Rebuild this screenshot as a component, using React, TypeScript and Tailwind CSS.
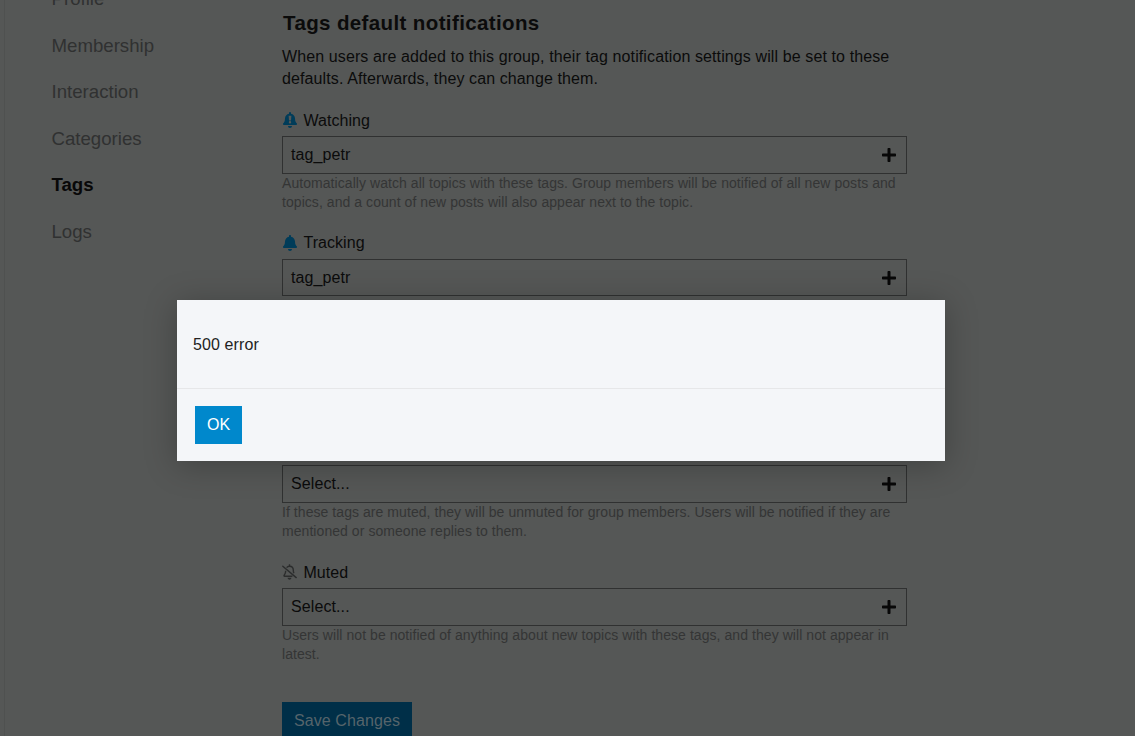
import React from "react";
import { FaBell, FaPlus } from "react-icons/fa";

const navItems = ["Profile", "Membership", "Interaction", "Categories", "Tags", "Logs"];

const WatchingIcon = () => (
  <svg viewBox="0 0 448 512" className="-mt-0.5 h-4 w-3.5 text-[#003c59]" fill="currentColor" fillRule="evenodd">
    <path d="M224 512c35 0 64-29 64-64H160c0 35 29 64 64 64zM439 362c-19-21-55-52-55-154 0-78-54-140-128-155V32a32 32 0 1 0-64 0v21C118 68 64 130 64 208c0 102-36 133-55 154-6 6-9 14-9 22 0 16 13 32 32 32h384c19 0 32-16 32-32 0-8-3-16-9-22zM180 118h88l-12 150h-64zM224 288a38 38 0 1 1 0 76 38 38 0 0 1 0-76z" />
  </svg>
);

const MutedIcon = () => (
  <svg viewBox="0 0 15 16" className="-mt-0.5 h-4 w-[15px] text-[#2c2d2d]" fill="none" stroke="currentColor" strokeWidth="1.4">
    <path d="M0.8 2.2l13.4 11.4" strokeLinecap="round" />
    <path d="M4.6 3.6c.7-.9 1.7-1.4 2.9-1.4 2.2 0 3.8 1.7 3.8 4 0 1.3.2 2.3.6 3.1M3.7 6.8c0 2.4-.8 3.6-1.5 4.4-.4.5-.2 1.1.4 1.1h7.8" />
    <path d="M7.5.3v1.9" />
    <path d="M5.6 13.8h3.8c0 1-.8 1.9-1.9 1.9s-1.9-.9-1.9-1.9z" fill="currentColor" stroke="none" />
  </svg>
);

type FieldProps = {
  icon: React.ReactNode;
  label: string;
  value: string;
  help: string;
  className: string;
  compact?: boolean;
};

const TagField = ({ icon, label, value, help, className, compact }: FieldProps) => (
  <div className={className}>
    <div className={compact ? "flex h-[27px] items-start gap-1.5 leading-[22px]" : "flex h-[26px] items-start gap-1.5 leading-[22px]"}>
      <span className="flex h-[22px] w-[15px] items-center justify-center">{icon}</span>
      <span className="pl-[0.4px] tracking-[0.06px]">{label}</span>
    </div>
    <div
      className={
        compact
          ? "mb-1 flex h-[37px] items-center justify-between border border-[#303131] pr-2.5 pl-2"
          : "flex h-[38px] items-center justify-between border border-[#303131] pr-2.5 pl-2"
      }
    >
      <span className={compact ? "pt-px tracking-[0.1px]" : "pb-px tracking-[0.1px]"}>{value}</span>
      <FaPlus className="h-4 w-3.5 text-[#080808]" />
    </div>
    <p className="text-[14px] leading-[19px] tracking-[0.06px] text-[#343535]">{help}</p>
  </div>
);

const App = () => {
  return (
    <div className="relative h-[736px] w-[1135px] overflow-hidden bg-[#555756] font-['Liberation_Sans',Arial,sans-serif] text-base text-[#0b0b0b]">
      <div className="ml-[4px] flex h-full border-l border-[#4f5150]">
        {/* Group settings navigation */}
        <nav className="-mt-6 w-[277px] shrink-0 pl-[46.5px] text-[18.65px] text-[#303131]">
          {navItems.map((item) => (
            <div
              key={item}
              className={item === "Tags" ? "h-[46.6px] font-bold leading-[46.6px] text-[#080808]" : "h-[46.6px] leading-[46.6px]"}
            >
              {item}
            </div>
          ))}
        </nav>

        {/* Tag notification defaults */}
        <main className="w-[625px] shrink-0 pt-[11px]">
          <h3 className="mb-[11px] pl-px text-[20.5px] font-bold leading-6 tracking-[0.38px]">Tags default notifications</h3>
          <p className="mb-5 leading-[22px] tracking-[0.11px]">
            When users are added to this group, their tag notification settings will be set to these defaults. Afterwards, they can change them.
          </p>
          <TagField
            className="h-[122px]"
            icon={<WatchingIcon />}
            label="Watching"
            value="tag_petr"
            help="Automatically watch all topics with these tags. Group members will be notified of all new posts and topics, and a count of new posts will also appear next to the topic."
          />
          <TagField
            compact
            className="h-[207px]"
            icon={<FaBell className="h-4 w-3.5 text-[#003c59]" />}
            label="Tracking"
            value="tag_petr"
            help="Automatically track all topics with these tags. A count of new posts will appear next to the topic."
          />
          <TagField
            className="h-[123px]"
            icon={<FaBell className="h-4 w-3.5 text-[#003c59]" />}
            label="Watching First Post"
            value="Select..."
            help="If these tags are muted, they will be unmuted for group members. Users will be notified if they are mentioned or someone replies to them."
          />
          <TagField
            className="h-[140px]"
            icon={<MutedIcon />}
            label="Muted"
            value="Select..."
            help="Users will not be notified of anything about new topics with these tags, and they will not appear in latest."
          />
          <button className="h-[38px] w-[130px] bg-[#002f48] tracking-[0.1px] text-[#55646b]">Save Changes</button>
        </main>
      </div>

      {/* Error dialog */}
      <div className="absolute top-[300px] left-[177px] h-[161px] w-[768px] bg-[#f4f6f9] text-[#222] shadow-[0_4px_30px_rgba(0,0,0,0.25)]">
        <div className="h-[89px] border-b border-[#e6e7e9] px-4 pt-[34px] leading-[22px] tracking-[0.1px]">500 error</div>
        <div className="px-[18px] pt-[17px]">
          <button className="h-[38px] w-[47px] bg-[#0088cc] text-white">OK</button>
        </div>
      </div>
    </div>
  );
};

export default App;
